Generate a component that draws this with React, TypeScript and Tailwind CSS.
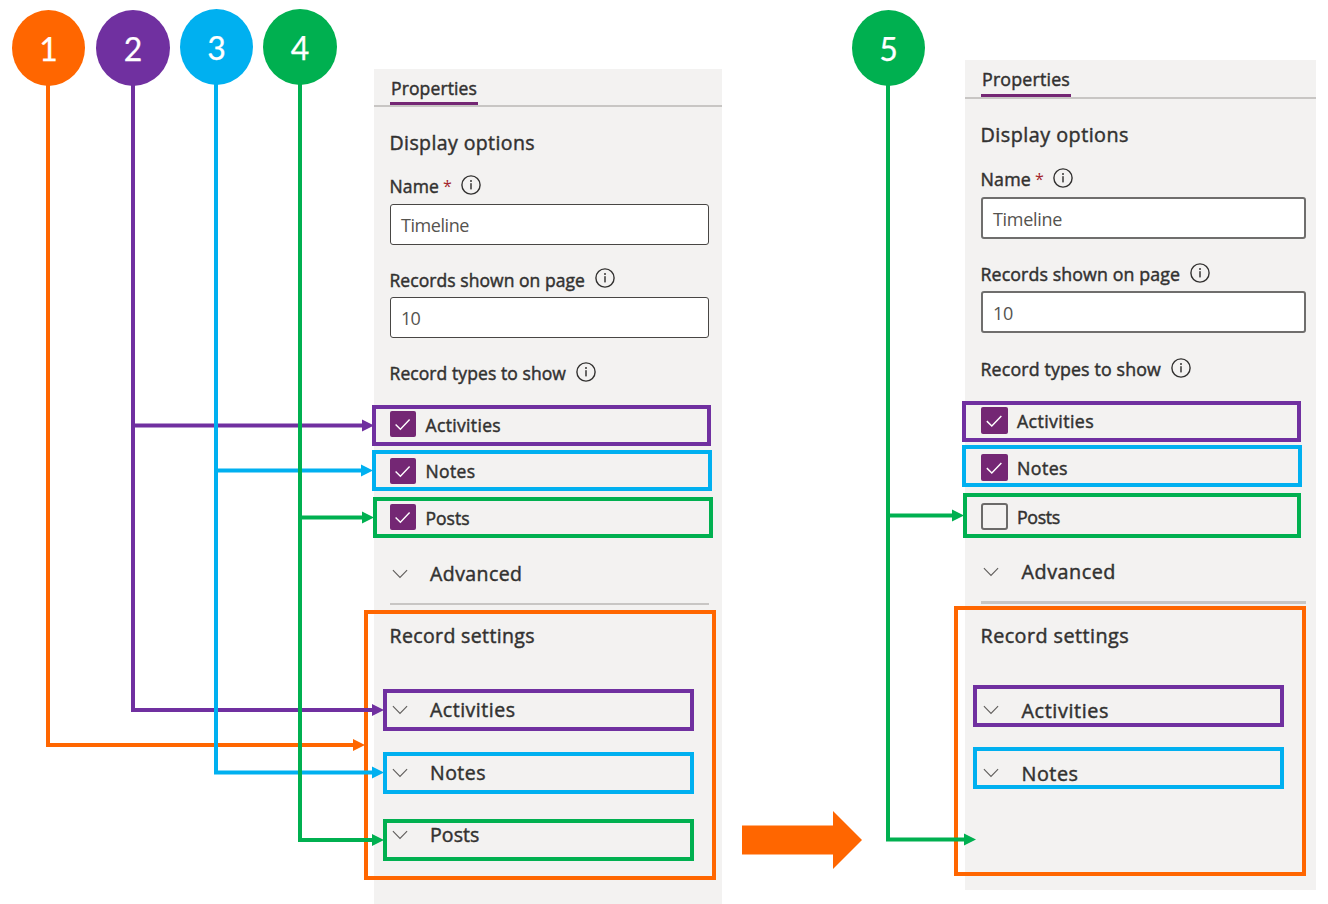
import { useLayoutEffect, useRef } from "react";

type TextProps = { children: string; width: number; className: string };

/* Text fitted to a given advance width through letter spacing. */
function FitText({ children, width, className }: TextProps) {
  const ref = useRef<HTMLSpanElement>(null);
  useLayoutEffect(() => {
    const el = ref.current;
    if (!el) return;
    el.style.letterSpacing = "0px";
    const natural = el.getBoundingClientRect().width;
    el.style.letterSpacing = `${(width - natural) / children.length}px`;
  }, [children, width]);
  return (
    <span ref={ref} className={`inline-block whitespace-nowrap ${className}`}>
      {children}
    </span>
  );
}

function InfoIcon({ className }: { className: string }) {
  return (
    <svg viewBox="0 0 20 20" className={`size-5 shrink-0 ${className}`} fill="none">
      <circle cx="10" cy="10" r="9.1" stroke="#323130" strokeWidth="1.4" />
      <rect x="9.2" y="8.2" width="1.6" height="6.2" fill="#454442" />
      <rect x="9.1" y="5.1" width="1.8" height="1.8" fill="#454442" />
    </svg>
  );
}

function Chevron() {
  return (
    <svg viewBox="0 0 16 10" className="mb-px ml-[1.5px] h-2.5 w-4 shrink-0" fill="none">
      <path d="M0.9 1.2 8 8.4 15.1 1.2" stroke="#605e5c" strokeWidth="1.1" />
    </svg>
  );
}

function Check({ checked, className }: { checked: boolean; className: string }) {
  if (!checked) {
    return <span className={`shrink-0 rounded-[3px] border-2 border-[#6b6a69] ${className}`} />;
  }
  return (
    <span className={`shrink-0 rounded-[2px] bg-[#742774] ${className}`}>
      <svg viewBox="0 0 26 26" className="size-full" fill="none">
        <path d="M5.6 13.6 10.4 18.2 19.6 8.6" stroke="#fff" strokeWidth="1.4" />
      </svg>
    </span>
  );
}

type Item = { text: string; width: number; row: string; checked?: boolean };

type PanelSpec = {
  panel: string;
  header: string;
  tab: string;
  tabText: string;
  heading: string;
  label: string;
  value: string;
  field: string;
  displayRow: string;
  nameRow: string;
  nameInput: string;
  recordsRow: string;
  recordsInput: string;
  typesRow: string;
  box: string;
  checkLabel: string;
  advancedRow: string;
  divider: string;
  settingsRow: string;
  widths: number[];
  checks: Item[];
  sections: Item[];
  sectionText: string;
};

const left: PanelSpec = {
  panel: "mt-[69px] h-[835px] w-[348px] pr-[13px]",
  header: "-mr-[13px]",
  tab: "h-9 w-[88px]",
  tabText: "text-[17.5px] leading-[39px]",
  heading: "-ml-[0.5px] text-[19.5px] leading-6",
  label: "-ml-[0.5px] text-[17.5px] leading-[26px]",
  value: "-ml-px text-[18px] leading-6",
  field: "border-[1.5px] border-[#484644]",
  displayRow: "mt-6",
  nameRow: "mt-[19px]",
  nameInput: "mt-1.5 h-[41px]",
  recordsRow: "mt-[22px] pt-px",
  recordsInput: "mt-1.5 h-[41px]",
  typesRow: "mt-[23px]",
  box: "size-[26px]",
  checkLabel: "ml-[9.5px] pt-px text-[17.5px] leading-6",
  advancedRow: "mt-[32px]",
  divider: "mt-[17px] h-0.5",
  settingsRow: "mt-[19px]",
  widths: [86, 145.5, 49.5, 68, 195.5, 19, 176.5, 92.5, 145.5],
  checks: [
    { text: "Activities", width: 75.5, row: "mt-[26px]", checked: true },
    { text: "Notes", width: 50, row: "mt-[20.5px]", checked: true },
    { text: "Posts", width: 44, row: "mt-[20.5px]", checked: true },
  ],
  sections: [
    { text: "Activities", width: 85.5, row: "mt-[50px]" },
    { text: "Notes", width: 56, row: "mt-[39px]" },
    { text: "Posts", width: 49.5, row: "mt-[38px]" },
  ],
  sectionText: "pl-[23px]",
};

const right: PanelSpec = {
  panel: "mt-[60px] ml-[243px] h-[830px] w-[351px] pr-[10px]",
  header: "-mr-[10px]",
  tab: "h-[37px] w-[90px]",
  tabText: "text-[17.8px] leading-[39px]",
  heading: "-ml-[0.5px] text-[19.8px] leading-6",
  label: "-ml-[0.5px] text-[17.8px] leading-[26px]",
  value: "-ml-px text-[18px] leading-6",
  field: "border-2 border-[#6f6e6d]",
  displayRow: "mt-6",
  nameRow: "mt-5",
  nameInput: "mt-1.5 h-[42px]",
  recordsRow: "mt-[23px]",
  recordsInput: "mt-[5px] h-[42px]",
  typesRow: "mt-6",
  box: "size-[27px]",
  checkLabel: "ml-[9px] pt-px text-[17.8px] leading-6",
  advancedRow: "mt-[30px]",
  divider: "mt-[17px] h-[3px]",
  settingsRow: "mt-5",
  widths: [88, 148.5, 50.5, 69, 199.5, 20, 180.5, 94.5, 148.5],
  checks: [
    { text: "Activities", width: 77, row: "mt-[26px]", checked: true },
    { text: "Notes", width: 51, row: "mt-5", checked: true },
    { text: "Posts", width: 43, row: "mt-[22px]", checked: false },
  ],
  sections: [
    { text: "Activities", width: 87.5, row: "mt-[50.5px]" },
    { text: "Notes", width: 57, row: "mt-[39px]" },
  ],
  sectionText: "pl-[23.5px]",
};

function PropertiesPanel({ spec }: { spec: PanelSpec }) {
  const w = spec.widths;
  const strong = "[-webkit-text-stroke:0.45px_#323130] text-[#323130]";
  const label = `${strong} ${spec.label}`;
  const heading = `${strong} ${spec.heading}`;
  const value = `text-[#55534f] ${spec.value}`;
  return (
    <section className={`flex shrink-0 flex-col bg-[#f3f2f1] pl-4 ${spec.panel}`}>
      <header className={`-ml-4 border-b-2 border-[#c8c6c4] pl-4 ${spec.header}`}>
        <div className={`border-b-[3px] border-[#742774] pl-px ${spec.tab}`}>
          <FitText width={w[0]} className={`${strong} ${spec.tabText}`}>Properties</FitText>
        </div>
      </header>

      <h2 className={`flex h-6 items-center ${spec.displayRow}`}>
        <FitText width={w[1]} className={heading}>Display options</FitText>
      </h2>
      <div className={`flex h-6 items-center ${spec.nameRow}`}>
        <FitText width={w[2]} className={label}>Name</FitText>
        <span className="ml-1 w-3 text-[16px] leading-6 text-[#a4262c]">*</span>
        <InfoIcon className="mb-[3px] ml-1.5" />
      </div>
      <div className={`flex items-center rounded-[3px] bg-white pt-px pl-[11px] ${spec.field} ${spec.nameInput}`}>
        <FitText width={w[3]} className={value}>Timeline</FitText>
      </div>
      <div className={`flex h-6 items-center ${spec.recordsRow}`}>
        <FitText width={w[4]} className={label}>Records shown on page</FitText>
        <InfoIcon className="mb-[3px] ml-[10px]" />
      </div>
      <div className={`flex items-center rounded-[3px] bg-white pt-px pl-[11px] ${spec.field} ${spec.recordsInput}`}>
        <FitText width={w[5]} className={value}>10</FitText>
      </div>
      <div className={`flex h-6 items-center ${spec.typesRow}`}>
        <FitText width={w[6]} className={label}>Record types to show</FitText>
        <InfoIcon className="mb-[3px] ml-[10px]" />
      </div>

      {spec.checks.map((c) => (
        <div key={c.text} className={`flex items-center ${c.row}`}>
          <Check checked={!!c.checked} className={spec.box} />
          <FitText width={c.width} className={`${strong} ${spec.checkLabel}`}>{c.text}</FitText>
        </div>
      ))}

      <div className={`flex h-6 items-center ${spec.advancedRow}`}>
        <Chevron />
        <div className={`flex ${spec.sectionText}`}>
          <FitText width={w[7]} className={heading}>Advanced</FitText>
        </div>
      </div>
      <div className={`bg-[#c8c6c4] ${spec.divider}`} />
      <h2 className={`flex h-6 items-center ${spec.settingsRow}`}>
        <FitText width={w[8]} className={heading}>Record settings</FitText>
      </h2>
      {spec.sections.map((s) => (
        <div key={s.text} className={`flex h-6 items-center ${s.row}`}>
          <Chevron />
          <div className={`flex ${spec.sectionText}`}>
            <FitText width={s.width} className={heading}>{s.text}</FitText>
          </div>
        </div>
      ))}
    </section>
  );
}

/* Callout frames laid over the panels. */
const frames = [
  "left-[372px] top-[405px] h-[41px] w-[339px] border-[#7030a0]",
  "left-[372px] top-[450px] h-[41px] w-[340px] border-[#00b0f0]",
  "left-[373px] top-[497px] h-[41px] w-[340px] border-[#00b050]",
  "left-[364px] top-[610px] h-[270px] w-[352px] border-[#ff6600]",
  "left-[383px] top-[689px] h-[42px] w-[311px] border-[#7030a0]",
  "left-[383px] top-[752px] h-[42px] w-[311px] border-[#00b0f0]",
  "left-[383px] top-[819px] h-[42px] w-[311px] border-[#00b050]",
  "left-[962px] top-[401px] h-[41px] w-[339px] border-[#7030a0]",
  "left-[962px] top-[445px] h-[42px] w-[340px] border-[#00b0f0]",
  "left-[963px] top-[493px] h-[45px] w-[338px] border-[#00b050]",
  "left-[954px] top-[606px] h-[270px] w-[352px] border-[#ff6600]",
  "left-[973px] top-[685px] h-[42px] w-[311px] border-[#7030a0]",
  "left-[973px] top-[747px] h-[42px] w-[311px] border-[#00b0f0]",
];

type Connector = { color: string; x: number; top: number; targets: [number, number][] };

const connectors: Connector[] = [
  { color: "#ff6600", x: 48, top: 84, targets: [[365, 745]] },
  { color: "#7030a0", x: 133, top: 84, targets: [[374, 425.5], [384, 710]] },
  { color: "#00b0f0", x: 216, top: 83, targets: [[373, 470.5], [384, 772.5]] },
  { color: "#00b050", x: 300, top: 83, targets: [[374, 517.5], [384, 840]] },
  { color: "#00b050", x: 888, top: 84, targets: [[964, 515.5], [976, 839.5]] },
];

function Connectors() {
  return (
    <svg viewBox="0 0 1328 904" className="absolute inset-0 h-[904px] w-[1328px]" fill="none">
      {connectors.map(({ color, x, top, targets }) => (
        <g key={x}>
          {targets.map(([tip, y], i) => (
            <g key={y}>
              <path
                d={i === targets.length - 1 ? `M${x} ${top}V${y}H${tip - 10}` : `M${x} ${y}H${tip - 10}`}
                stroke={color}
                strokeWidth="4"
              />
              <path d={`M${tip - 12} ${y - 6}L${tip} ${y}L${tip - 12} ${y + 6}Z`} fill={color} />
            </g>
          ))}
        </g>
      ))}
      <path d="M742 825.5H833V811L862 840 833 869V854.5H742Z" fill="#ff6600" />
    </svg>
  );
}

const badges = [
  { n: "1", cls: "left-3 top-2.5 w-[73px] bg-[#ff6600]" },
  { n: "2", cls: "left-24 top-2.5 w-[74px] bg-[#7030a0]" },
  { n: "3", cls: "left-[180px] top-[9px] w-[73px] bg-[#00b0f0]" },
  { n: "4", cls: "left-[263px] top-[9px] w-[74px] bg-[#00b050]" },
  { n: "5", cls: "left-[852px] top-2.5 w-[73px] bg-[#00b050]" },
];

export default function App() {
  return (
    <main className="relative flex h-[904px] w-[1328px] items-start overflow-hidden bg-white pl-[374px] font-['Open_Sans','Noto_Sans',sans-serif]">
      <PropertiesPanel spec={left} />
      <PropertiesPanel spec={right} />
      {frames.map((f) => (
        <div key={f} className={`absolute border-4 ${f}`} />
      ))}
      <Connectors />
      {badges.map((b) => (
        <div
          key={b.n}
          className={`absolute flex h-[76px] items-center justify-center rounded-[50%] pt-px font-['Lato',sans-serif] text-[32px] leading-none text-white [-webkit-text-stroke:0.25px_white] ${b.cls}`}
        >
          {b.n}
        </div>
      ))}
    </main>
  );
}
